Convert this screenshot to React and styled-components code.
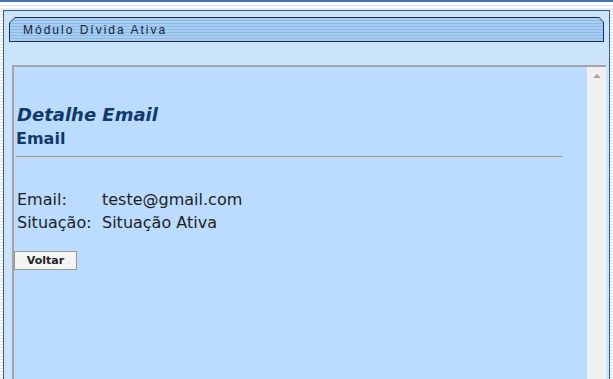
import React from "react";
import styled, { createGlobalStyle } from "styled-components";

const Global = createGlobalStyle`
  html, body { margin: 0; padding: 0; height: 100%; }
  body {
    background: repeating-linear-gradient(to bottom, #ffffff 0 2px, #cfe1f3 2px 3px);
    overflow: hidden;
  }
  #root { height: 100%; }
`;

const Page = styled.div`
  height: 379px;
  display: flex;
  flex-direction: column;
`;

const TopBar = styled.div`
  height: 8px;
  border-top: 2px solid #4a74a8;
  background: linear-gradient(to bottom, #ffffff 0 3px, #d4e4f4 3px 4px, #ffffff 4px 6px, #e3eefa 6px 8px);
  flex: none;
`;

const Frame = styled.div`
  flex: 1;
  margin: 0 3px;
  border: 1px solid #3b5b80;
  border-bottom: none;
  background: #cbe3fb;
  display: flex;
  flex-direction: column;
  min-height: 0;
`;

const Tab = styled.div`
  margin: 6px 5px 0 5px;
  height: 25px;
  background: #1d2f4f;
  clip-path: polygon(6px 0, calc(100% - 5px) 0, 100% 5px, 100% 100%, 0 100%, 0 6px);
  padding: 1px;
  box-sizing: border-box;
  flex: none;
`;

const TabInner = styled.div`
  height: 100%;
  background: repeating-linear-gradient(to bottom, #a9cdf1 0 2px, #8bb8e5 2px 3px);
  clip-path: polygon(5px 0, calc(100% - 4px) 0, 100% 4px, 100% 100%, 0 100%, 0 5px);
  display: flex;
  align-items: center;
  padding-left: 13px;
`;

const TabTitle = styled.span`
  font-family: "Liberation Sans", Arial, sans-serif;
  font-size: 12px;
  letter-spacing: 2px;
  color: #13233f;
`;

const Panel = styled.div`
  flex: 1;
  margin: 23px 3px 0 8px;
  border-top: 2px solid #a2a4a8;
  border-left: 2px solid #a2a4a8;
  background: #bbdcfe;
  display: flex;
  min-height: 0;
`;

const Content = styled.div`
  flex: 1;
  padding-top: 37px;
  font-family: "DejaVu Sans", Verdana, sans-serif;
`;

const Title = styled.h1`
  margin: 0 0 0 3px;
  font-size: 18px;
  font-style: italic;
  font-weight: bold;
  color: #0f3a69;
  line-height: 22px;
`;

const Subtitle = styled.h2`
  margin: 2px 0 0 2px;
  font-size: 16px;
  font-weight: bold;
  color: #0f3a69;
  line-height: 22px;
`;

const Rule = styled.hr`
  margin: 6px 0 0 2px;
  width: 546px;
  border: none;
  border-top: 1px solid #8e99a6;
  border-bottom: 1px solid #d0dbe6;
  height: 0;
`;

const Fields = styled.div`
  margin: 32px 0 0 3px;
  display: grid;
  grid-template-columns: 85px auto;
  row-gap: 3px;
  font-size: 16px;
  line-height: 20px;
  color: #1e1e1e;
`;

const Label = styled.span``;
const Value = styled.span``;

const Button = styled.button`
  margin-top: 18px;
  width: 63px;
  height: 19px;
  padding: 0;
  border: 1px solid #9a9a9a;
  background: #f4f4f4;
  font-family: "DejaVu Sans", Verdana, sans-serif;
  font-size: 11px;
  font-weight: bold;
  color: #222;
  display: block;
`;

const Scrollbar = styled.div`
  width: 19px;
  background: #f0f0f0;
  flex: none;
  display: flex;
  justify-content: center;
  padding-top: 7px;
  box-sizing: border-box;
`;

const Arrow = styled.div`
  width: 0;
  height: 0;
  border-left: 4px solid transparent;
  border-right: 4px solid transparent;
  border-bottom: 4px solid #a3a3a3;
`;

export default function App() {
  return (
    <Page>
      <Global />
      <TopBar />
      <Frame>
        <Tab>
          <TabInner>
            <TabTitle>Módulo Dívida Ativa</TabTitle>
          </TabInner>
        </Tab>
        <Panel>
          <Content>
            <Title>Detalhe Email</Title>
            <Subtitle>Email</Subtitle>
            <Rule />
            <Fields>
              <Label>Email:</Label>
              <Value>teste@gmail.com</Value>
              <Label>Situação:</Label>
              <Value>Situação Ativa</Value>
            </Fields>
            <Button>Voltar</Button>
          </Content>
          <Scrollbar>
            <Arrow />
          </Scrollbar>
        </Panel>
      </Frame>
    </Page>
  );
}
